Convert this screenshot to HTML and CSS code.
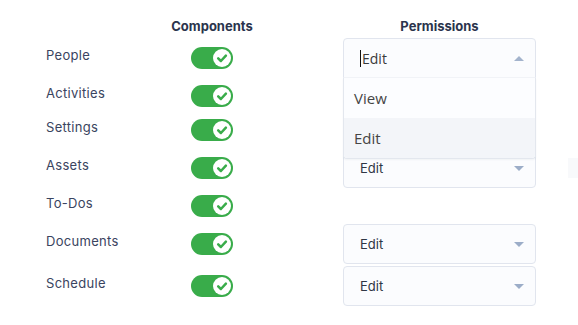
FILE: index.html
```html
<!DOCTYPE html>
<html>
<head>
<meta charset="utf-8">
<link rel="stylesheet" href="styles.css">
</head>
<body>
<div class="page">
  <div class="row head">
    <div></div>
    <div class="th">Components</div>
    <div></div>
    <div class="th">Permissions</div>
  </div>

  <div class="row h40">
    <div class="label">People</div>
    <div class="cell"><span class="toggle"><span class="knob"><svg viewBox="0 0 18 18" width="18" height="18"><path d="M5.2 9.3 L7.9 12 L12.9 6.6" fill="none" stroke="#39ac4a" stroke-width="2.5" stroke-linecap="round" stroke-linejoin="round"/></svg></span></span></div>
    <div></div>
    <div class="select open">
      <div class="sel-top">
        <span class="caret"></span><span class="open-val">Edit</span>
        <span class="arrow up"></span>
      </div>
      <div class="menu">
        <div class="opt">View</div>
        <div class="opt active">Edit</div>
      </div>
    </div>
  </div>

  <div class="row h36">
    <div class="label">Activities</div>
    <div class="cell"><span class="toggle"><span class="knob"><svg viewBox="0 0 18 18" width="18" height="18"><path d="M5.2 9.3 L7.9 12 L12.9 6.6" fill="none" stroke="#39ac4a" stroke-width="2.5" stroke-linecap="round" stroke-linejoin="round"/></svg></span></span></div>
  </div>

  <div class="row h32">
    <div class="label">Settings</div>
    <div class="cell"><span class="toggle"><span class="knob"><svg viewBox="0 0 18 18" width="18" height="18"><path d="M5.2 9.3 L7.9 12 L12.9 6.6" fill="none" stroke="#39ac4a" stroke-width="2.5" stroke-linecap="round" stroke-linejoin="round"/></svg></span></span></div>
  </div>

  <div class="row h44">
    <div class="label">Assets</div>
    <div class="cell"><span class="toggle"><span class="knob"><svg viewBox="0 0 18 18" width="18" height="18"><path d="M5.2 9.3 L7.9 12 L12.9 6.6" fill="none" stroke="#39ac4a" stroke-width="2.5" stroke-linecap="round" stroke-linejoin="round"/></svg></span></span></div>
    <div></div>
    <div class="select"><span class="val">Edit</span><span class="arrow"></span></div>
  </div>

  <div class="row h32">
    <div class="label">To-Dos</div>
    <div class="cell"><span class="toggle"><span class="knob"><svg viewBox="0 0 18 18" width="18" height="18"><path d="M5.2 9.3 L7.9 12 L12.9 6.6" fill="none" stroke="#39ac4a" stroke-width="2.5" stroke-linecap="round" stroke-linejoin="round"/></svg></span></span></div>
  </div>

  <div class="row h44">
    <div class="label">Documents</div>
    <div class="cell"><span class="toggle"><span class="knob"><svg viewBox="0 0 18 18" width="18" height="18"><path d="M5.2 9.3 L7.9 12 L12.9 6.6" fill="none" stroke="#39ac4a" stroke-width="2.5" stroke-linecap="round" stroke-linejoin="round"/></svg></span></span></div>
    <div></div>
    <div class="select"><span class="val">Edit</span><span class="arrow"></span></div>
  </div>

  <div class="row h40">
    <div class="label">Schedule</div>
    <div class="cell"><span class="toggle"><span class="knob"><svg viewBox="0 0 18 18" width="18" height="18"><path d="M5.2 9.3 L7.9 12 L12.9 6.6" fill="none" stroke="#39ac4a" stroke-width="2.5" stroke-linecap="round" stroke-linejoin="round"/></svg></span></span></div>
    <div></div>
    <div class="select"><span class="val">Edit</span><span class="arrow"></span></div>
  </div>

  <div class="ghost"></div>
</div>
</body>
</html>
```

FILE: styles.css
```css
html, body {
  margin: 0;
  padding: 0;
  background: #ffffff;
}
body {
  font-family: Inter, "Liberation Sans", sans-serif;
  width: 578px;
  height: 325px;
  overflow: hidden;
}
.page {
  position: relative;
  padding-left: 46px;
}
.row {
  display: grid;
  grid-template-columns: 125px 82px 90px 193px;
  align-items: center;
}
.head {
  height: 38px;
  align-items: start;
}
.th {
  padding-top: 17px;
  font-size: 13px;
  line-height: 18px;
  font-weight: 700;
  color: #2b344d;
  text-align: center;
}
.h32 { height: 32px; }
.h36 { height: 36px; }
.h40 { height: 40px; }
.h44 { height: 44px; }
.label {
  font-size: 13px;
  line-height: 16px;
  color: #3a4460;
  padding-bottom: 6px;
  letter-spacing: 0.3px;
}
.cell {
  display: flex;
  justify-content: center;
}
.toggle {
  display: flex;
  justify-content: flex-end;
  align-items: center;
  box-sizing: border-box;
  width: 42px;
  height: 22px;
  padding: 2px;
  border-radius: 11px;
  background: #39ac4a;
}
.knob {
  width: 18px;
  height: 18px;
  border-radius: 50%;
  background: #ffffff;
  display: flex;
}
.select {
  position: relative;
  box-sizing: border-box;
  height: 40px;
  border: 1px solid #e1e5ee;
  border-radius: 4px;
  background: #fbfcfe;
  display: flex;
  align-items: center;
  padding: 0 11px 0 16px;
}
.val {
  flex: 1;
  font-size: 13px;
  color: #2f3645;
}
.arrow {
  width: 0;
  height: 0;
  border-left: 5px solid transparent;
  border-right: 5px solid transparent;
  border-top: 5px solid #9cadc8;
}
.arrow.up {
  border-top: 0;
  border-bottom: 5px solid #a3b3cc;
}
.select.open {
  border-radius: 4px 4px 0 0;
  padding: 0;
  display: block;
}
.sel-top {
  height: 38px;
  display: flex;
  align-items: center;
  padding: 0 11px 0 16px;
  border-bottom: 1px solid #f1f3f7;
}
.caret {
  width: 1px;
  height: 17px;
  background: #111111;
  margin-right: 1px;
}
.open-val {
  flex: 1;
  font-family: "Open Sans", "Noto Sans", sans-serif;
  font-size: 14px;
  color: #3a3a3a;
}
.menu {
  position: absolute;
  left: -1px;
  top: 39px;
  width: 193px;
  box-sizing: border-box;
  border: 1px solid #e3e7ee;
  border-top: 0;
  border-radius: 0 0 4px 4px;
  background: #fcfdff;
  z-index: 5;
  box-shadow: 0 1px 2px rgba(40, 50, 80, 0.05);
}
.opt {
  height: 40px;
  display: flex;
  align-items: center;
  padding-left: 10px;
  font-family: "Open Sans", "Noto Sans", sans-serif;
  font-size: 15px;
  color: #454545;
}
.opt.active {
  background: #f3f5f9;
  border-radius: 0 0 4px 4px;
}
.ghost {
  position: absolute;
  left: 568px;
  top: 158px;
  width: 10px;
  height: 20px;
  background: #f8f9fb;
}
```
